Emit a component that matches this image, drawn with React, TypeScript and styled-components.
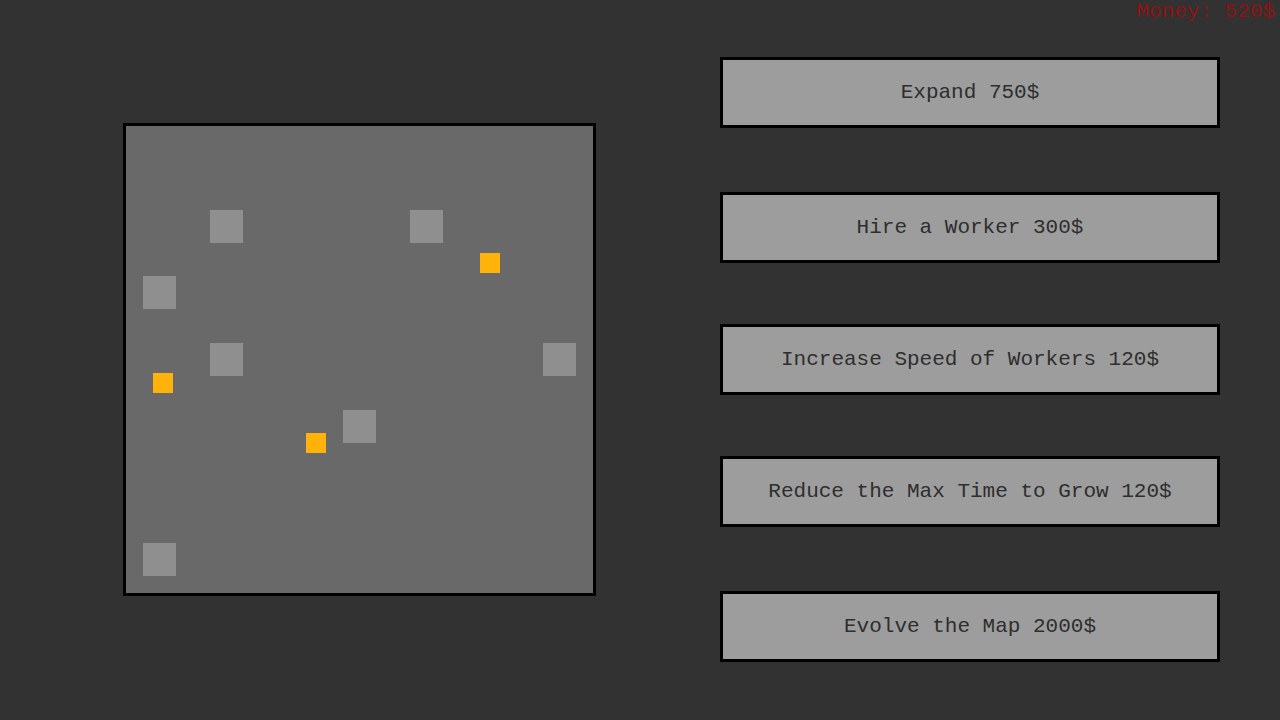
import React from "react";
import styled, { createGlobalStyle } from "styled-components";

const Global = createGlobalStyle`
  html, body { margin: 0; padding: 0; background: #323232; }
  body { font-family: "Liberation Mono", "Courier New", monospace; }
`;

const Page = styled.div`
  position: relative;
  width: 1280px;
  height: 720px;
  display: flex;
  align-items: flex-start;
  overflow: hidden;
`;

const Money = styled.div`
  position: absolute;
  top: 0;
  right: 5px;
  font-size: 21px;
  line-height: 24px;
  color: #8e1212;
`;

const MapFrame = styled.div`
  position: relative;
  margin: 123px 0 0 123px;
  width: 467px;
  height: 467px;
  border: 3px solid #000;
  background: #696969;
  display: grid;
  grid-template-columns: repeat(7, 1fr);
  grid-template-rows: repeat(7, 1fr);
`;

const Tile = styled.div<{ $col: number; $row: number }>`
  grid-column: ${(p) => p.$col + 1};
  grid-row: ${(p) => p.$row + 1};
  align-self: center;
  justify-self: center;
  width: 33px;
  height: 33px;
  background: #8f8f8f;
`;

const Worker = styled.div`
  position: absolute;
  width: 20px;
  height: 20px;
  background: #ffb30a;
`;

const Column = styled.div`
  margin: 57px 0 0 124px;
  display: flex;
  flex-direction: column;
`;

const ActionButton = styled.button<{ $gap: number }>`
  margin-top: ${(p) => p.$gap}px;
  width: 500px;
  height: 71px;
  box-sizing: border-box;
  border: 3px solid #000;
  background: #9d9d9d;
  color: #2e2e2e;
  font-family: "Liberation Mono", "Courier New", monospace;
  font-size: 21px;
  display: flex;
  align-items: center;
  justify-content: center;
  padding: 0;
  cursor: pointer;
`;

const tiles = [
  [1, 1],
  [4, 1],
  [0, 2],
  [1, 3],
  [6, 3],
  [3, 4],
  [0, 6],
];

const workers = [
  [354, 127],
  [27, 247],
  [180, 307],
];

const actions = [
  ["Expand 750$", 0],
  ["Hire a Worker 300$", 64],
  ["Increase Speed of Workers 120$", 61],
  ["Reduce the Max Time to Grow 120$", 61],
  ["Evolve the Map 2000$", 64],
] as const;

export default function App() {
  return (
    <>
      <Global />
      <Page>
        <MapFrame>
          {tiles.map(([c, r], i) => (
            <Tile key={i} $col={c} $row={r} />
          ))}
          {workers.map(([x, y], i) => (
            <Worker key={i} style={{ left: x, top: y }} />
          ))}
        </MapFrame>
        <Column>
          {actions.map(([label, gap]) => (
            <ActionButton key={label} $gap={gap}>
              {label}
            </ActionButton>
          ))}
        </Column>
        <Money>Money: 520$</Money>
      </Page>
    </>
  );
}
